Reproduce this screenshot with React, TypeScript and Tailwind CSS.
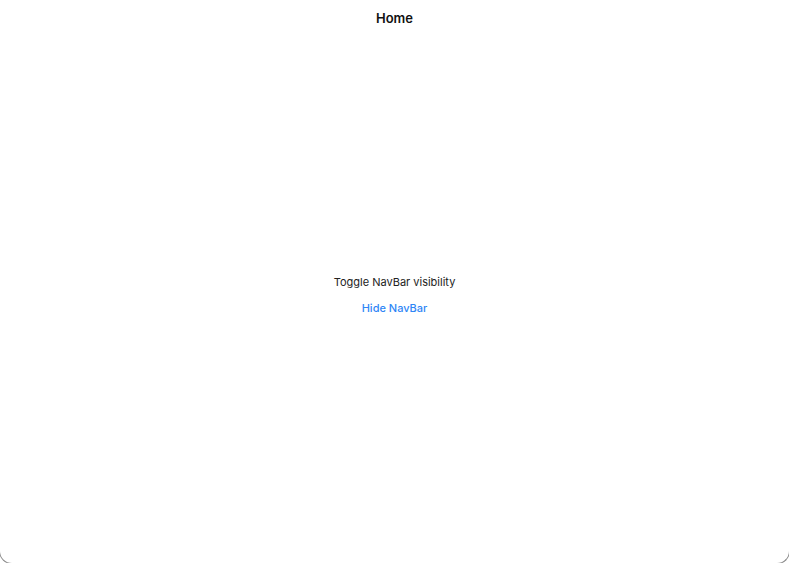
export default function App() {
  return (
    <div className="h-[563px] w-full overflow-hidden bg-white" style={{ fontFamily: "Inter, 'Noto Sans', sans-serif" }}>
      {/* device frame: straight edges pushed just outside the viewport, only the corners show */}
      <div className="-mx-px flex h-[564px] flex-col rounded-b-[13px] border border-t-0 border-[#8a8a8a]">
        <header className="flex h-[38px] shrink-0 items-center justify-center">
          <h1 className="text-[13px] font-semibold text-[#111]">Home</h1>
        </header>

        <main className="flex flex-1 flex-col items-center justify-center gap-3 pb-[11px]">
          <p className="text-[11px] leading-[14px] text-[#222]">Toggle NavBar visibility</p>
          <button className="text-[11px] font-medium leading-[14px] text-[#2f86f6]">Hide NavBar</button>
        </main>
      </div>
    </div>
  )
}
